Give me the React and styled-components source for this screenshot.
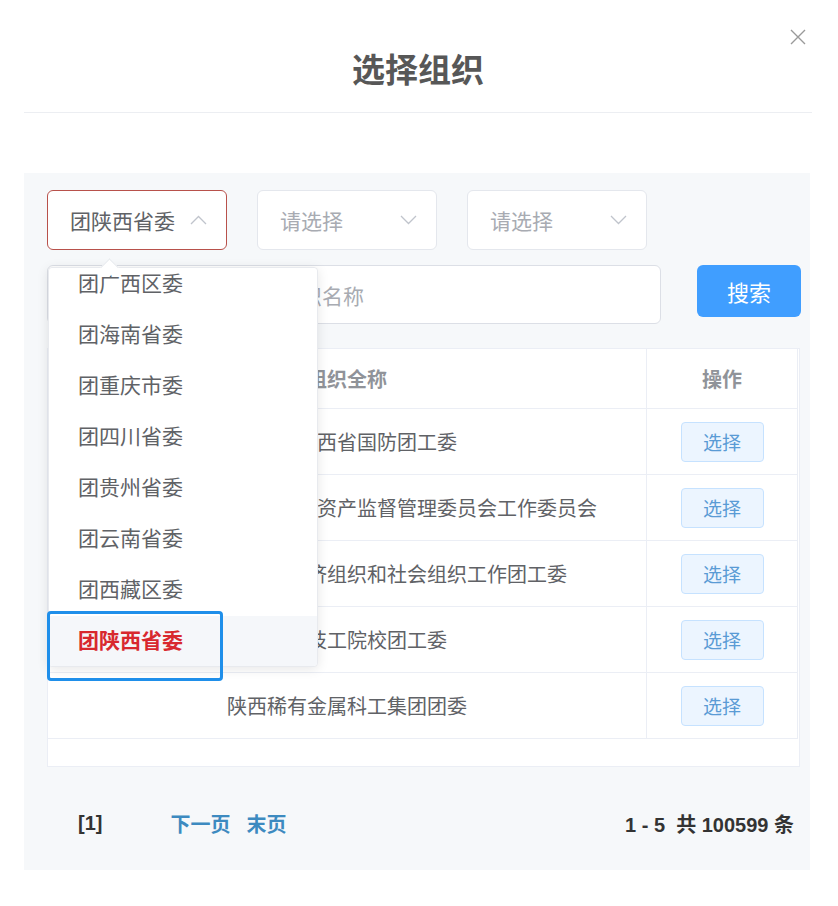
import React from "react";
import styled, { createGlobalStyle } from "styled-components";

const GlobalStyle = createGlobalStyle`
  body {
    margin: 0;
    background: #ffffff;
    font-family: "Noto Sans CJK SC", "Noto Sans", sans-serif;
  }
`;

const provinces = [
	"团广西区委",
	"团海南省委",
	"团重庆市委",
	"团四川省委",
	"团贵州省委",
	"团云南省委",
	"团西藏区委",
	"团陕西省委"
];

const orgs = [
	"共青团陕西省国防团工委",
	"中共陕西省人民政府国有资产监督管理委员会工作委员会",
	"陕西省级非公有制经济组织和社会组织工作团工委",
	"陕西省技工院校团工委",
	"陕西稀有金属科工集团团委"
];

export default function App() {
	return (
		<Dialog>
			<GlobalStyle />
			<Header>
				<Title>选择组织</Title>
				<Close aria-label="close">
					<svg width="16" height="16" viewBox="0 0 16 16">
						<path d="M1 1 L15 15 M15 1 L1 15" stroke="#9a9a9a" strokeWidth="1.4" fill="none" />
					</svg>
				</Close>
			</Header>

			<Panel>
				<Filters>
					<SelectWrap>
						<Select $active>
							<SelectText>团陕西省委</SelectText>
							<Chevron up />
						</Select>
						<Dropdown>
							<Arrow />
							<OptionList>
								{provinces.map(p => (
									<Option key={p} $selected={p === "团陕西省委"}>
										{p}
									</Option>
								))}
							</OptionList>
							<Highlight />
						</Dropdown>
					</SelectWrap>
					<SelectWrap>
						<Select>
							<SelectText $placeholder>请选择</SelectText>
							<Chevron />
						</Select>
					</SelectWrap>
					<SelectWrap>
						<Select>
							<SelectText $placeholder>请选择</SelectText>
							<Chevron />
						</Select>
					</SelectWrap>
				</Filters>

				<SearchRow>
					<SearchInput placeholder="请输入要查询的基层团组织名称" />
					<SearchButton>搜索</SearchButton>
				</SearchRow>

				<TableWrap>
					<Table>
						<HeadRow>
							<HeadCell $divider>组织全称</HeadCell>
							<HeadCell>操作</HeadCell>
						</HeadRow>
						{orgs.map(name => (
							<Row key={name}>
								<Cell $divider>{name}</Cell>
								<Cell>
									<PickButton>选择</PickButton>
								</Cell>
							</Row>
						))}
					</Table>
				</TableWrap>

				<Pager>
					<PageNo>[1]</PageNo>
					<PageLink>下一页</PageLink>
					<PageLink>末页</PageLink>
					<Total>1 - 5&nbsp;&nbsp;共 100599 条</Total>
				</Pager>
			</Panel>
		</Dialog>
	);
}

function Chevron({ up }) {
	return (
		<svg width="17" height="10" viewBox="0 0 17 10">
			<polyline
				points={up ? "1,9 8.5,1.5 16,9" : "1,1 8.5,8.5 16,1"}
				stroke="#c0c4cc"
				strokeWidth="1.3"
				fill="none"
			/>
		</svg>
	);
}

/* dialog frame */
const Dialog = styled.div`
	width: 838px;
	height: 906px;
	background: #fff;
`;

const Header = styled.div`
	display: grid;
	grid-template-columns: 1fr auto 1fr;
	height: 113px;
	margin: 0 26px 0 24px;
	border-bottom: 1px solid #eceef2;
	box-sizing: border-box;
`;

const Title = styled.h1`
	grid-column: 2;
	margin: 48px 0 0;
	font-size: 33px;
	line-height: 40px;
	font-weight: 700;
	color: #575757;
	align-self: start;
`;

const Close = styled.span`
	grid-column: 3;
	justify-self: end;
	align-self: start;
	margin: 29px 6px 0 0;
	display: flex;
`;

const Panel = styled.div`
	margin: 60px 28px 0 24px;
	height: 697px;
	padding: 17px 9px 0 23px;
	background: #f6f8fa;
	box-sizing: border-box;
	display: flex;
	flex-direction: column;
`;

/* selects */
const Filters = styled.div`
	display: flex;
	gap: 30px;
`;

const SelectWrap = styled.div`
	position: relative;
`;

const Select = styled.div`
	width: 180px;
	height: 60px;
	box-sizing: border-box;
	padding: 0 19px 0 22px;
	display: flex;
	align-items: center;
	justify-content: space-between;
	background: #fff;
	border: 1px solid ${p => (p.$active ? "#b8514b" : "#e4e7ed")};
	border-radius: 6px;
`;

const SelectText = styled.span`
	font-size: 21px;
	color: ${p => (p.$placeholder ? "#a8abb2" : "#606266")};
`;

const Dropdown = styled.div`
	position: absolute;
	top: calc(100% + 17px);
	left: 1px;
	width: 270px;
	height: 400px;
	background: #fff;
	border: 1px solid #e8eaee;
	border-radius: 4px;
	box-shadow: 0 2px 12px rgba(0, 0, 0, 0.1);
	box-sizing: border-box;
	z-index: 10;
`;

const Arrow = styled.span`
	position: absolute;
	top: -7px;
	left: 54px;
	width: 12px;
	height: 12px;
	background: #fff;
	border-left: 1px solid #e8eaee;
	border-top: 1px solid #e8eaee;
	transform: rotate(45deg);
`;

const OptionList = styled.div`
	height: 100%;
	overflow: hidden;
	border-radius: 4px;
	&::before {
		content: "";
		display: block;
		margin-top: -9px;
	}
`;

const Option = styled.div`
	height: 51px;
	box-sizing: border-box;
	display: flex;
	align-items: center;
	padding: 0 0 5px 29px;
	font-size: 21px;
	color: ${p => (p.$selected ? "#d8282e" : "#606266")};
	font-weight: ${p => (p.$selected ? 700 : 400)};
	background: ${p => (p.$selected ? "#f5f7fa" : "#fff")};
`;

/* annotation box drawn over the picked option */
const Highlight = styled.span`
	position: absolute;
	left: -2px;
	top: 343px;
	width: 176px;
	height: 70px;
	box-sizing: border-box;
	border: 3px solid #1f8fea;
	border-radius: 4px;
`;

/* search */
const SearchRow = styled.div`
	display: flex;
	align-items: flex-start;
	margin-top: 15px;
`;

const SearchInput = styled.input`
	width: 614px;
	height: 59px;
	box-sizing: border-box;
	padding: 0 22px;
	font-family: inherit;
	font-size: 21px;
	color: #606266;
	border: 1px solid #dcdfe6;
	border-radius: 6px;
	background: #fff;
	outline: none;
	&::placeholder {
		color: #a8abb2;
	}
`;

const SearchButton = styled.button`
	margin-left: 36px;
	width: 104px;
	height: 52px;
	border: none;
	border-radius: 6px;
	background: #409eff;
	color: #fff;
	font-family: inherit;
	font-size: 22px;
`;

/* table */
const TableWrap = styled.div`
	margin-top: 24px;
	width: 753px;
	height: 419px;
	box-sizing: border-box;
	background: #fff;
	border: 1px solid #ebeef5;
`;

const Table = styled.div`
	width: 750px;
	border-right: 1px solid #ebeef5;
	box-sizing: border-box;
`;

const HeadRow = styled.div`
	display: grid;
	grid-template-columns: 599px 1fr;
	height: 60px;
	box-sizing: border-box;
	border-bottom: 1px solid #ebeef5;
`;

const Row = styled(HeadRow)`
	height: 66px;
`;

const HeadCell = styled.div`
	display: flex;
	align-items: center;
	justify-content: center;
	font-size: 20px;
	font-weight: 700;
	color: #909399;
	border-right: ${p => (p.$divider ? "1px solid #ebeef5" : "none")};
`;

const Cell = styled.div`
	display: flex;
	align-items: center;
	justify-content: center;
	font-size: 20px;
	color: #606266;
	border-right: ${p => (p.$divider ? "1px solid #ebeef5" : "none")};
`;

const PickButton = styled.button`
	width: 83px;
	height: 40px;
	border: 1px solid #c6e2ff;
	border-radius: 4px;
	background: #ecf5ff;
	color: #5a9bd5;
	font-family: inherit;
	font-size: 19px;
`;

/* pagination */
const Pager = styled.div`
	display: flex;
	align-items: center;
	margin-top: 42px;
	padding: 0 7px 0 31px;
	font-family: "Liberation Sans", "Noto Sans CJK SC", sans-serif;
	font-size: 20px;
	font-weight: 700;
`;

const PageNo = styled.span`
	color: #333;
	margin-right: 68px;
`;

const PageLink = styled.span`
	color: #3d8ac0;
	margin-right: 16px;
`;

const Total = styled.span`
	margin-left: auto;
	color: #333;
`;
